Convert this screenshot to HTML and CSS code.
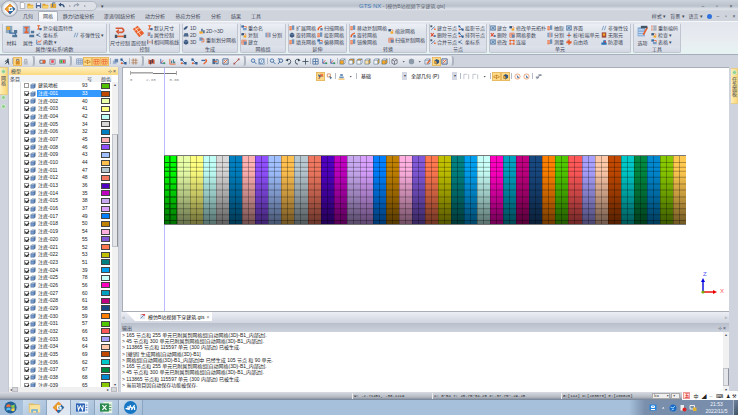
FILE: index.html
```html
<!DOCTYPE html>
<html lang="zh-CN">
<head>
<meta charset="utf-8">
<title>GTS NX</title>
<link rel="stylesheet" href="styles.css">
</head>
<body>
<div class="app">
  <header class="top">
    <button class="orb" aria-label="主菜单" data-icon="gts"></button>
    <div class="titlebar">
      <div class="quick" data-icons="doc folder save folder foldout undo dot redo dot"></div>
      <span class="quick-more">▾</span>
      <h1 class="title"><b>GTS NX</b> - [模仿B站视频下穿建筑.gts]</h1>
      <div class="winbtns"><button>–</button><button>▫</button><button>×</button></div>
    </div>
    <nav class="tabs">
      <a href="#">几何</a><a href="#" class="active">网格</a><a href="#" class="wide">静力/边坡分析</a><a href="#" class="wide">渗流/固结分析</a><a href="#" class="mid">动力分析</a><a href="#" class="wide">热应力分析</a><a href="#">分析</a><a href="#">结果</a><a href="#">工具</a>
      <div class="tabs-right"><button>样式 ▾</button><button>背景 ▾</button><button>语言 ▾</button><span class="help"></span><button>–</button><button>▫</button><button>×</button></div>
    </nav>
  </header>
  <section class="ribbon" id="ribbon"></section>
  <section class="toolbar">
    <div class="pill p1" data-icons="run | lock:on lockg"></div>
    <div class="pill p2" data-icons="radio record greenrec"></div>
    <div class="pill p3" data-icons="grid wire:on mesh:on mesh:on | copy nodes | hash"></div>
    <div class="pill p4" data-icons="flag axis bars nodes nodes turn split frame line"></div>
    <div class="pill p5" data-icons="zoom zoomw | zoom zoomi rotl rotr plus | views axis axis | cubea cubeb cubec cubed cubee cubef | wirecube drop ball drop brush shade:on frame"></div>
  </section>
  <main class="work">
    <aside class="rail left"><div class="railtab"><i class="dotg"></i><span>网格</span></div><i class="dotg"></i><i class="dotg"></i></aside>
    <section class="panel">
      <div class="panel-head"><span>模型</span><span class="tools">⊹ ×</span></div>
      <div class="tree">
        <table>
          <thead><tr><th>条目</th><th>号</th><th>颜色</th></tr></thead>
          <tbody id="rows"></tbody>
        </table>
        <div class="vscroll"><span>▴</span><div class="thumb"></div><span>▾</span></div>
      </div>
      <div class="hscroll"><span>◂</span><i></i><span class="end">▸</span><i></i></div>
    </section>
    <section class="center">
      <div class="viewport">
        <div class="origin"></div>
        <div class="viewtop">
          <div class="scale"><div class="bar"></div><div class="marks"><span>0</span><span>2.83</span><span>5.66</span></div></div>
          <div class="selectbar">
            <span data-icons="pick:on picks | person drop |"></span>
            <span class="pickbox"><select aria-label="选择类型"><option>基础</option></select></span>
            <span class="pickbox"><select aria-label="过滤"><option>全部几何 (P)</option></select></span>
            <span class="after" data-icons="| dash dash drop | wire:on shade:on | clock clock | link"></span>
          </div>
        </div>
        <div class="mesh" id="mesh"></div>
        <svg class="triad" viewBox="0 0 26 26"><path d="M6 20V9" stroke="#0000e0" stroke-width="1.4"/><path d="M4 10L6 6l2 4z" fill="#0000e0"/><path d="M6 20h11" stroke="#e80000" stroke-width="1.4"/><path d="M16 18l4 2-4 2z" fill="#e80000"/><circle cx="6" cy="20" r="1.6" fill="#7a0"/><text x="6" y="4" class="z">Z</text><text x="23" y="21" class="x">X</text></svg>
      </div>
      <div class="docs"><span class="arr">◃</span><div class="doctab"><i data-icon="page"></i><span>模仿B站视频下穿建筑.gts</span><small>×</small></div><span class="arr last">▹</span></div>
      <div class="out-head"><span>输出</span><span class="tools">⊹ ×</span></div>
      <div class="output">
        <ul>
          <li>&gt; 165 节点和 255 单元已附属到网格组[自动网格(3D)-B1_内部边].</li>
          <li>&gt; 45 节点和 300 单元已附属到网格组[自动网格(3D)-B1_内部边].</li>
          <li>&gt; 113865 节点和 115597 单元 (300 内部边) 已被生成.</li>
          <li>&gt; [撤销] 生成网格[自动网格(3D)-B1]</li>
          <li>&gt; 网格组[自动网格(3D)-B1_内部边]中 已经生成 105 节点 和 90 单元.</li>
          <li>&gt; 165 节点和 255 单元已附属到网格组[自动网格(3D)-B1_内部边].</li>
          <li>&gt; 45 节点和 300 单元已附属到网格组[自动网格(3D)-B1_内部边].</li>
          <li>&gt; 113865 节点和 115597 单元 (300 内部边) 已被生成.</li>
          <li>&gt; 当前项目因自动保存功能被保存.</li>
        </ul>
        <div class="vscroll out"><span>▴</span><div class="thumb"></div><span>▾</span></div>
      </div>
    </section>
    <aside class="rail right"><div class="railtab tall"><i class="dotg"></i><span>任务面板</span></div></aside>
  </main>
  <footer class="status">
    <span class="s1">W: -2.71451, -30.2219</span><span class="s2">X: 0~54 Y: 25.75~34.25 Z:-37.75~-29.25</span><span class="s3">G:[144] N:[283073] E:[288020]</span>
    <span class="unit">kN <b>▾</b></span><span class="unit small"><b>▾</b></span>
    <div class="ime"><b>五</b><span>中</span><span>◢</span><span>··</span><span>⌨</span><span>♟</span><span>⚒</span></div>
  </footer>
  <div class="taskbar">
    <button class="task start" aria-label="开始" data-icon="win"></button>
    <button class="task" aria-label="资源管理器" data-icon="explorer"></button>
    <button class="task on" aria-label="GTS NX" data-icon="gts"></button>
    <button class="task" aria-label="Word" data-icon="word"></button>
    <button class="task" aria-label="Excel" data-icon="excel"></button>
    <button class="task" aria-label="录屏" data-icon="jx"></button>
    <div class="tray"><span class="trayicons" data-icons="trayblue up globe trayred traynet"></span><time>21:53<br>2022/11/5</time><i class="peek"></i></div>
  </div>
</div>
<script src="app.js"></script>
</body>
</html>
```
FILE: styles.css
```css
* { box-sizing: border-box; }
body { margin: 0; overflow: hidden; font: 5px/6px "Liberation Sans", "Noto Sans CJK SC", sans-serif; color: #3f4756; background: #d0d4de; }
button, select, input { font: inherit; color: inherit; margin: 0; padding: 0; border: 0; background: none; }
a { color: inherit; text-decoration: none; }
ul { list-style: none; margin: 0; padding: 0; }
svg { display: block; }
.app { height: 100vh; display: flex; flex-direction: column; }
.icon { width: 7px; height: 7px; flex: none; }
[data-icons] { display: flex; align-items: center; }
.sep { width: 1px; height: 6px; background: #b4bac6; flex: none; }

.top { position: relative; background: linear-gradient(#cdd3dc, #b9c1cb 6px, #dfe3ea 9px, #cfd3dc 11px); }
.orb { position: absolute; left: 1px; top: 0; width: 17px; height: 17px; border-radius: 50%; background: radial-gradient(#fff 40%, #dfe3e8 60%, #8f98a6); border: 1px solid #a0a8b4; display: grid; place-items: center; }
.orb .icon { width: 12px; height: 12px; }
.titlebar { height: 11px; display: flex; align-items: center; }
.quick { margin-left: 14px; padding: 0 8px 0 5px; width: 83px; height: 10px; justify-content: space-between; border: 1px solid #b4bbc6; border-left: 0; border-radius: 0 6px 6px 0; background: #dde1e7; }
.quick-more { margin-left: 4px; }
.title { flex: 1; margin: 0; text-align: center; font-size: 5px; font-weight: 400; color: #5d6470; }
.title b { font-weight: 400; color: #3f79b8; font-size: 6px; }
.winbtns { display: flex; gap: 8px; padding-right: 4px; }
.winbtns button { width: 6px; }
.tabs { height: 10px; display: flex; padding-left: 18px; align-items: stretch; }
.tabs > a { width: 20px; text-align: center; line-height: 10px; white-space: nowrap; }
.tabs .active { background: linear-gradient(#fff, #eef1f6); border: 1px solid #a9b1be; border-bottom: 0; border-radius: 2px 2px 0 0; line-height: 9px; }
.tabs .wide { width: 41px; }
.tabs .mid { width: 30px; }
.tabs .wide + .mid + .wide { width: 36px; }
.tabs-right { margin-left: auto; display: flex; align-items: center; gap: 4px; padding-right: 2px; }
.tabs-right button { min-width: 4px; white-space: nowrap; }
.help { width: 5px; height: 5px; border-radius: 50%; background: #2f72dd; }

.ribbon { height: 34px; display: flex; gap: 2px; padding: 1px 1px 1px 2px; background: linear-gradient(#e3e6ee, #e8edf1 20px, #e6f3f3); border-top: 1px solid #f5f6f8; border-bottom: 1px solid #a7aebb; }
.group { border: 1px solid #c0c5d0; border-top-color: #e4e7ee; border-radius: 2px; background: linear-gradient(#eceff5, #dfe3eb 8px, #d9dde7 24px, #d9dee8); display: flex; flex-direction: column; }
.cols { flex: 1; display: flex; }
.col { display: flex; flex-direction: column; justify-content: space-around; flex: none; }
.col.two { justify-content: center; gap: 3px; }
.item { display: flex; align-items: center; gap: 1px; white-space: nowrap; line-height: 6px; height: 6px; }
.item .icon { width: 6px; height: 6px; }
.big { justify-content: center; gap: 2px; align-items: center; }
.bigbtn { display: flex; flex-direction: column; align-items: center; gap: 2px; white-space: nowrap; width: 100%; }
.bigbtn .icon { width: 13px; height: 13px; }
.caption { height: 6px; line-height: 6px; text-align: center; background: linear-gradient(#dfe3ec, #d2d7e2); }

.toolbar { height: 12px; display: flex; background: #ced3dd; padding: 1px 0; }
.pill { display: flex; align-items: center; justify-content: space-between; padding: 0 4px; border-right: 2px solid #aeb5c1; border-radius: 0 3px 3px 0; background: linear-gradient(#f0f2f6, #d5dae3); }
.p1 { width: 35px; } .p2 { width: 37px; } .p3 { width: 72px; } .p4 { width: 102px; } .p5 { width: 208px; }
.hot { background: #ffd98a; box-shadow: 0 0 0 1px #e8bb62; }

.work { flex: 1; min-height: 0; display: flex; }
.rail { width: 8px; background: #ced3dd; flex: none; }
.rail.right { width: 9px; padding: 1px 0 0 2px; }
.railtab { height: 28px; background: linear-gradient(90deg, #ffeeb8, #fbd877); border: 1px solid #e6cd88; border-left: 0; padding-top: 1px; }
.railtab.tall { height: 36px; }
.railtab span { writing-mode: vertical-rl; display: block; line-height: 6px; margin-top: 2px; }
.dotg { display: block; width: 5px; height: 5px; margin: 0 0 4px 1px; border-radius: 50%; background: #8fcf8f; border: 1px solid #d5edcb; }
.railtab .dotg { margin-bottom: 0; }
.panel { width: 111px; flex: none; display: flex; flex-direction: column; border: solid #c2c7d0; border-width: 0 1px; background: #fff; }
.panel-head { height: 8px; flex: none; display: flex; justify-content: space-between; align-items: center; padding: 0 2px; background: linear-gradient(#fff0c0, #fbd980); }
.tree { flex: 1; min-height: 0; display: flex; overflow: hidden; }
.tree table { flex: 1; display: flex; flex-direction: column; min-width: 0; }
thead { background: #f2f3f5; }
tr { display: grid; grid-template-columns: 1fr 28px 9px; align-items: center; width: 101px; }
thead tr { height: 7px; width: 106px; grid-template-columns: 1fr 14px 15px; }
th, td { padding: 0; font-weight: 400; text-align: left; line-height: 6px; white-space: nowrap; }
th { padding-left: 1px; }
tbody { display: grid; grid-template-rows: repeat(40, 1fr); flex: none; height: calc(100% - 5px); background: linear-gradient(90deg, transparent 3px, #ececec 3px 4px, transparent 4px 11px, #e0e0e0 11px 12px, transparent 12px); }
.cell { display: flex; align-items: center; padding-left: 15px; height: 7px; }
.cell input { appearance: none; width: 5px; height: 5px; border: 1px solid #999; background: #fff; flex: none; position: relative; }
.cell input:checked::after { content: ""; position: absolute; left: 0; top: 0; width: 3px; height: 2px; border: solid #222; border-width: 0 0 1px 1px; transform: rotate(-45deg); }
.cell .icon { width: 6px; height: 6px; margin: 0 1px; }
.cell label { padding: 0 1px; flex: 1; height: 7px; line-height: 7px; color: #222; }
.num { padding-left: 9px; height: 7px; line-height: 7px; color: #222; }
.sel label, .sel .num { background: #3399ff; color: #fff; }
.sw { height: 6px; border: 1px solid #454545; }
.vscroll { width: 6px; margin-top: 7px; background: #f1f1f1; display: flex; flex-direction: column; justify-content: space-between; align-items: center; font-size: 4px; line-height: 5px; flex: none; position: relative; }
.vscroll .thumb { position: absolute; left: 0; right: 0; top: 17%; height: 37%; background: #e4e5e8; border: 1px solid #bfc2c8; border-right-color: #8d9098; }
.hscroll { height: 5px; flex: none; display: flex; align-items: center; background: #f0f0f0; font-size: 4px; line-height: 5px; padding: 0 1px; }
.hscroll i { width: 6px; height: 5px; background: #d5d6da; border: 1px solid #babcc2; }
.hscroll .end { margin-left: auto; margin-right: 2px; }

.center { flex: 1; min-width: 0; display: flex; flex-direction: column; padding-left: 2px; }
.viewport { flex: 1; min-height: 0; position: relative; background: #fff; border: 1px solid #a9adb6; border-width: 1px 0 1px 1px; margin-left: 1px; display: flex; flex-direction: column; }
.origin { position: absolute; left: 41px; top: 0; bottom: 0; width: 1px; background: #b9b9ff; }
.viewtop { height: 87px; flex: none; display: flex; align-items: flex-start; }
.scale { margin: 3px 0 0 7px; width: 49px; color: #888; font: 4px/6px "Liberation Mono", monospace; }
.bar { width: 47px; height: 4px; border: solid #aaa; border-width: 0 1px; background: linear-gradient(90deg, #aaa 50%, #fff 50%) 0 1px / 100% 1px no-repeat, linear-gradient(90deg, #ccc 50%, #777 50%) 0 2px / 100% 1px no-repeat; }
.marks { display: flex; justify-content: space-between; margin-top: 2px; }
.selectbar { display: flex; align-items: center; margin: 4px 0 0 138px; }
.selectbar [data-icons] { gap: 2px; }
.selectbar .after { margin-left: 3px; }
.pickbox { display: flex; align-items: center; width: 50px; }
.pickbox:first-of-type { width: 45px; }
.pickbox::after { content: "▾"; width: 5px; flex: none; height: 8px; line-height: 8px; font-size: 4px; text-align: center; background: #d5d8e3; }
.pickbox select { appearance: none; flex: 1; min-width: 0; height: 8px; padding-left: 4px; line-height: 8px; color: #111; border-radius: 0; }
.mesh { position: relative; height: 70px; margin: 0 43px 0 41px; display: flex; flex: none; border: solid #777; border-width: 1px 0; }
.mesh i { flex: 1; border-left: 1px solid rgba(0,0,0,.25); background: linear-gradient(90deg, transparent 5px, rgba(0,0,0,.28) 5px 6px, transparent 6px); }
.mesh svg { position: absolute; inset: 0; width: 100%; height: 100%; }
.triad { position: absolute; right: 6px; bottom: 13px; width: 26px; height: 26px; overflow: visible; }
.triad text { font-size: 6px; } .z { fill: #55f; } .x { fill: #f55; }
.docs { height: 11px; flex: none; display: flex; align-items: stretch; background: linear-gradient(#eceef4, #cfd4df); }
.arr { width: 5px; line-height: 10px; padding-left: 1px; color: #888; }
.last { margin-left: auto; }
.doctab { display: flex; align-items: center; gap: 2px; background: #fff; padding: 0 3px 0 13px; height: 9px; color: #111; clip-path: polygon(0 0, 100% 0, 100% 100%, 9px 100%); white-space: nowrap; }
.doctab small { font-size: 5px; color: #777; }
.out-head { height: 9px; flex: none; display: flex; justify-content: space-between; align-items: center; padding: 0 3px 0 1px; background: linear-gradient(#b8bfcb, #cdd3dd); }
.output { height: 60px; flex: none; display: flex; background: #fff; }
.output ul { flex: 1; display: grid; grid-template-rows: repeat(9, 1fr); height: 56px; padding-left: 1px; color: #222; white-space: nowrap; }
.vscroll.out { margin: 0; }
.out .thumb { top: 60%; height: 30%; }

.status { height: 7px; flex: none; display: flex; align-items: center; position: relative; background: linear-gradient(#d8dbe1, #b5bac3 5px, #8d949f); font: 4px/6px "Liberation Mono", monospace; padding-right: 58px; justify-content: flex-end; white-space: nowrap; color: #222; }
.status > span { border-left: 1px solid #e8eaee; padding-left: 1px; height: 6px; }
.s1 { width: 80px; } .s2 { width: 129px; } .s3 { width: 90px; }
.status .unit { width: 18px; background: #eee; display: flex; justify-content: space-between; border: 1px solid #aaa; line-height: 4px; margin-left: 1px; }
.status .small { width: 9px; }
.ime { position: absolute; right: 0; bottom: -1px; width: 56px; height: 9px; background: #fdfdfd; display: flex; align-items: center; justify-content: space-around; font: 5px/6px "Liberation Sans", "Noto Sans CJK SC", sans-serif; z-index: 2; }
.ime b { color: #d33; border: 1px solid #e99; line-height: 5px; background: #fde6e0; }

.taskbar { height: 16px; flex: none; display: flex; background: #a6c0dc; border-top: 1px solid #7c8b9d; }
.task { width: 24px; display: grid; place-items: center; border-right: 1px solid #8ba4c0; background: linear-gradient(135deg, #cbdbeb, #a4bdd8); }
.start { width: 23px; background: none; border-right: 0; padding-right: 3px; }
.task.on { background: #dfe8f2; }
.task .icon { width: 13px; height: 13px; }
.tray { margin-left: auto; display: flex; align-items: center; padding-left: 20px; background: linear-gradient(90deg, #a6c0dc, #7a8fab 16px, #788dab); color: #f4f7fb; }
.trayicons { gap: 2px; margin-right: 7px; }
.trayicons .icon { width: 8px; height: 8px; }
.tray time { width: 25px; text-align: center; line-height: 7px; }
.peek { width: 5px; height: 100%; margin-left: 4px; background: linear-gradient(135deg, #71849e, #3f5368); border-left: 1px solid #a9b9cb; }
```
FILE: app.js
```js
const cube = (a, b, c) => `<path fill="${a}" d="M2 5h9v9H2z"/><path fill="${b}" d="M2 5l3-3h9l-3 3z"/><path fill="${c}" d="M11 5l3-3v9l-3 3z"/><path d="M2 5h9v9H2zl3-3h9v9l-3 3M11 5l3-3" fill="none" stroke="#35577c"/>`;
const Y = '#f5a623', W = '#f5f7fa', B = '#3c6ca5', O = '#e8612c';
const s = (d, c = B, w = 2) => `<path d="${d}" fill="none" stroke="${c}" stroke-width="${w}"/>`;
const f = (d, c = B) => `<path d="${d}" fill="${c}"/>`;
const nodes = s('M4 4l8 8M4 12h8') + f('M1 1h5v5H1zM10 9h5v6h-5z', '#2d5c93') + f('M2 10h4v4H2z', O);
const mesh = s('M2 3h12v11H2zM2 8h12M6 3v11M10 3v11', O, 1.5);
const arrow = s('M3 13L12 4M7 3h6v6', O);
const ICONS = {
  gts: f('M8 1l7 7-7 7-7-7z', '#d8342a') + f('M8 1l3.500 3.500-7 7L1 8z', '#e8a02c') + f('M8 8l3.500-3.500L15 8l-7 7-2-2z', '#2272a8') + s('M11 6H7v4h4V8H9', '#fff', 1.5),
  doc: f('M3 1h7l3 3v11H3z', '#fff') + s('M3 1h7l3 3v11H3z', '#667', 1),
  folder: f('M1 4h6l1 2h6v8H1z', '#d99a28') + f('M3 8h13l-3 6H1z', '#f7cf68'),
  foldout: f('M1 4h13v10H1z', '#e0a83a') + s('M6 11V2h6', '#45658f'),
  save: f('M2 2h12v12H2z', '#48668f') + f('M4 2h8v5H4zM5 10h6v4H5z', '#eef'),
  undo: s('M3 6h6q4 0 5 6', '#33507c', 3) + f('M7 1v10L1 6z', '#33507c'),
  redo: s('M13 6H7q-4 0-5 5', '#9ba4b4', 3) + f('M9 1v10l6-5z', '#9ba4b4'),
  dot: f('M7 8h3v2H7z', '#778'), drop: f('M6 7h5l-2.500 3z', '#556'), up: f('M6 9h5L8.500 6z', '#fff'),
  run: f('M9 1a2 2 0 110 4 2 2 0 010-4M6 5h5v6H6z', '#345') + s('M7 9L3 14M10 9l1 6M2 8l4-2', '#345'),
  lock: f('M4 7h9v8H4z', '#d48b24') + s('M6 7V3h5v4', '#667'), lockg: f('M4 7h9v8H4z', '#b6bac4') + s('M6 7V3h5v4', '#a0a5b0'),
  radio: s('M2 5h12v7H2z', '#667') + f('M8 5h6v7H8z', O), record: s('M2 3h12v11H2z', '#889') + f('M5 5h6v6H5z', '#e45'), greenrec: s('M1 4h14v8H1z', '#889') + f('M3 5h5v6H3z', '#3a3') + f('M9 5h4v6H9z', '#e33'),
  grid: s('M1 2h14v12H1zM1 6h14M1 10h14M6 2v12M11 2v12', '#8fa6c5', 2), wire: s('M1 9q7-7 14 0M1 9q7 6 14 0M8 4v10', '#b87518', 1.500),
  mesh, copy: f('M2 6h8v8H2z', '#9fb5d2') + f('M6 2h8v8H6z', '#6a8ab2'), nodes, hash: s('M5 1v14M11 1v14M1 5h14M1 11h14', '#b4835f'),
  flag: f('M1 3l5 2 4-3 5 2v10l-5-2-4 3-5-2z', '#c65a3a') + s('M6 5v9M10 3v9', '#335'), axis: s('M4 2v10h10', '#3669b8') + s('M4 12l6-7', '#d33', 1.500) + f('M10 10h4v4h-4z', '#3a9a55'),
  bars: s('M2 2v12h13', O) + s('M6 12V6M10 12V3M13 12V8', '#267'), turn: f('M1 4h9v3H1z', B) + s('M10 3q5 3 1 6L6 14', O, 3),
  split: f('M1 2h6v12H1z', '#47688e') + s('M9 4h5v9H9z', '#47688e') + s('M4 8h7', O), frame: s('M2 2h12v12H2z', '#46648a') + s('M4 12l8-8M5 5l5 5', O), line: s('M3 13L13 3', '#b95b50') + f('M1 11h4v4H1zM11 1h4v4h-4z', '#a55'),
  zoom: s('M3 6a4 4 0 118 0 4 4 0 01-8 0M10 9l5 5'), zoomi: s('M5 6a4 4 0 118 0 4 4 0 01-8 0M6 9l-4 5M2 2h4', '#345f91'), zoomw: f('M1 1h14v14H1z', '#7b9ac0') + s('M5 7a3 3 0 116 0 3 3 0 01-6 0M10 10l3 3', '#fff'),
  rotl: s('M4 4q9-3 9 4t-6 6', '#345') + f('M1 5l6-4v7z', '#345'), rotr: s('M12 4Q3 1 3 8t6 6', '#345') + f('M15 5L9 1v7z', '#345'), plus: s('M8 1v14M1 8h14', '#456'), views: s('M2 2h12v12H2zM8 2v12M2 8h12', '#5579a5'),
  cubea: cube(Y, W, W), cubeb: cube(W, Y, Y), cubec: cube(W, Y, W), cubed: cube('#fbe0a4', W, Y), cubee: cube(W, W, Y), cubef: cube(Y, W, Y),
  wirecube: s('M8 1l6 3v8l-6 3-6-3V4zM2 4l6 3 6-3M8 7v8', '#556', 1.500), ball: f('M8 1l6 3v8l-6 3-6-3V4z', '#8c99a9'), brush: cube('#dde4ee', W, W) + s('M7 13l7-8', O, 3), shade: f('M3 6l5-4 6 3v6l-6 4-5-3z', '#35577c') + f('M3 6l5 2v6l-5-3z', Y),
  pick: f('M2 3l11 4-5 2-2 5z', '#45688d') + arrow, picks: s('M3 2h7v7H3z', '#d59060') + f('M7 6l7 5-4 3z', '#55718f'), person: f('M5 2h6v5H5zM3 8h10v4H3z', '#6d92bc') + s('M1 14h14', Y), dash: s('M2 14V3h8M13 3v11', '#a5acb5', 1.500), clock: s('M2 8a6 6 0 1112 0A6 6 0 012 8', '#ea7d42', 1.500) + f('M6 4l6 6-4 2z', B), link: f('M2 8h7v4H2zM8 3h7v4H8z', '#8d96a4') + s('M4 14l8-10', '#8d96a4'),
  page: f('M2 2h11l1 12H2z', '#dfe5ee') + f('M4 2h10v5z', '#d44') + s('M4 12l7-7', B, 1.500),
  solid: cube('#779bd0', '#c8d9f2', '#4872ab'),
  mat: f('M1 1h8v9H1z', '#8ba7bb') + f('M2 2h4v4H2z', Y) + s('M6 6v4h7v3', B, 1.500) + f('M11 6h4v4h-4zM9 12h6v3H9z', '#52779c'), prop: f('M1 1h9v10H1z', '#9ab2d2') + s('M3 3h5M5.500 3v6M3 9h5', O) + f('M11 7h4v3h-4zM9 12h6v3H9z', '#52779c'),
  sect: s('M3 2h8M7 2v9M3 11h8', O, 2.500) + f('M9 8h6v6H9z', B), csys: s('M3 8l7-5M3 8l9 5', B) + f('M1 6h4v4H1z', '#567'), func: s('M2 2v12h12', B) + s('M4 11l4-6 2 4 5-7', O), hinge: s('M3 14L7 2M9 14l4-12', B, 1.500),
  size: s('M2 4h8q4 3 0 5H6', '#d85b38') + f('M6 5v7L2 8z', '#d85b38') + s('M2 14h12', O, 2) + f('M1 12h3v4H1zM12 12h3v4h-3z', '#456'), face: f('M1 5l6-4 8 9-6 5z', O) + s('M3 7l6-4M6 10l6-4M4 3l7 10', '#ffe2cf', 1),
  seed: s('M2 2v12M14 2v12', '#445') + s('M4 8h8', O), one: f('M2 9l6-6 6 1-6 7-6 2z', '#39577e'), two: f('M4 3h9l2 9H1z', '#39577e') + s('M2 8h12', '#9bb4d4', 1), three: f('M8 1l6 4v7l-6 3-6-3V5z', '#39577e') + s('M2 5l6 3 6-3', '#b8cbe2', 1),
  up3: f('M1 9h9v6H1z', Y) + f('M6 2h4v7H6zM11 6h4v8h-4z', '#46698f'), re: f('M1 1h9v9H1z', '#6f9ccc') + s('M5 5h8v8H6', O),
  part: f('M1 1h7v6H1z', B) + f('M5 8h10v6H5z', '#799dc5') + s('M8 4h6v4', O), copy2: f('M1 3h7v6H1z', '#375679') + f('M7 9h7v6H7z', Y) + s('M9 4l5 3', O), newg: mesh + f('M8 7h7v8H8z', '#5e87b5'), cut: f('M1 2h5v12H1zM10 2h5v12h-5z', '#80a1c8') + s('M8 1v14', O),
  ext: f('M1 3h6v11H1z', O) + f('M8 1h6v12H8z', '#7095bd') + s('M3 3v10M1 8h6', '#fff', 1), swp: s('M3 14Q3 5 13 3', O, 4) + f('M9 8h6v7H9z', '#5a80ac'), del: s('M2 3l8 9M10 3l-8 9', '#dc4b2d', 3) + f('M11 8h4v5h-4z', B), node: s('M3 13L13 4', B) + f('M1 1h5v5H1z', '#456') + f('M11 9h4v4h-4z', O), 
  edit: f('M1 2h14v12H1z', '#a8c2df') + s('M1 2h14v12H1zM3 12L13 4M5 5l8 8', '#46698f', 1.500), link2: s('M3 4h10v9H3z', O) + f('M1 2h4v4H1zM11 2h4v4h-4zM1 11h4v4H1zM11 11h4v4h-4z', O), pile: s('M8 1v14M2 9h12', B) + f('M5 7h6v4H5z', O), free: f('M6 1h4v14H6zM1 6h14v5H1z', O) + s('M3 3l10 10', '#a33', 1), inf: f('M2 1h12v14H2z', '#a34a38') + f('M5 4h6v6H5z', Y), wall: f('M1 9h14v6H1zM6 3h7v6H6z', '#2772b6') + f('M9 5h4v4H9z', '#d44'),
  opt: f('M2 3h9v11H2z', '#7eaad6') + s('M3 6h7M3 9h7M3 12h7', '#eef', 1) + s('M9 12l5-9', O) + f('M6 1h8v3H6z', '#456'), list: s('M1 3h3M1 8h3M1 13h3', O, 3) + s('M6 3h9M6 8h9M6 13h9', '#567'),
  win: '<circle cx="8" cy="8" r="7.500" fill="#226197"/>' + f('M3 5q3-2 5 0v3q-2-2-5 0z', '#ef7037') + f('M9 5q2 1 4-1v4q-2 1-4 0z', '#8dce48') + f('M3 9q3-2 5 0v3q-2-2-5 0z', '#56bdf2') + f('M9 9q2 1 4-1v4q-2 1-4 0z', '#ffd34c'),
  explorer: f('M1 3h6l1 1h6v10H1z', '#e1bd67') + f('M2 5h13v9H2z', '#f9e29b') + s('M5 14v-3h6v3', '#6aaedb'),
  word: f('M4 1h11v14H4z', '#e8f0fb') + f('M0 3h11v10H0z', '#2a62b5') + s('M2 5l1 6 2.500-5L8 11l1-6', '#fff', 1.300) + s('M12 5h2M12 8h2M12 11h2', '#2a62b5', 1),
  excel: f('M4 1h11v14H4z', '#e6f3e5') + f('M0 3h11v10H0z', '#2a8a4b') + s('M3 5l5 6M8 5l-5 6', '#fff', 1.500) + s('M11 5h3M11 8h3M11 11h3', '#2a8a4b', 1),
  jx: '<circle cx="8" cy="8" r="8" fill="#1476c4"/>' + s('M2 9l3 1V6M8 5L6 11M8 7l3 3M13 5l-4 6M13 7v4', '#fff', 1.500),
  trayblue: f('M1 1h14v12H1z', '#2585df') + s('M5 4h6v3H5zM4 11h8', '#fff'), globe: '<circle cx="8" cy="8" r="7" fill="#196bc8"/>' + s('M3 6l5 2 4-4M5 12l5-2', '#9bd0ff'), trayred: f('M3 2h7v11H3z', '#eee') + '<circle cx="11" cy="11" r="4" fill="#d22"/>', traynet: s('M2 3h9v7H2z', '#eee') + f('M8 7h7v7H8z', '#e3b231')
};
const svg = n => `<svg class="icon" viewBox="0 0 16 16" aria-hidden="true">${ICONS[n] || ''}</svg>`;
document.querySelectorAll('[data-icon]').forEach(e => { e.innerHTML = svg(e.dataset.icon); });
document.querySelectorAll('[data-icons]').forEach(e => {
  e.innerHTML = e.dataset.icons.split(' ').map(t => {
    if (t === '|') return '<span class="sep"></span>';
    const [n, on] = t.split(':');
    return on ? svg(n).replace('"icon"', '"icon hot"') : svg(n);
  }).join('');
});

// Each group: caption, width, columns of [width, items]; a leading * marks a large button.
const GROUPS = [
  ['属性/坐标系/函数', 105, [[17, '*mat 材料'], [16, '*prop 属性'], [37, 'sect 复杂截面特性', 'csys 坐标系', 'func 函数 ▾'], [34, 'hinge 非弹性铰 ▾']]],
  ['控制', 71, [[20, '*size 尺寸控制'], [17, '*face 面控制'], [32, 'sect 默认尺寸', 'prop 属性控制', 'seed 相同网格线']]],
  ['生成', 56, [[16, 'one 1D', 'two 2D', 'three 3D'], [38, 'up3 2D->3D', 're 重新划分网格']]],
  ['网格组', 46, [[24, 'part 重命名', 'copy2 复制', 'newg 建立'], [20, 'cut 分割']]],
  ['延伸', 59, [[28, 'ext 扩展网格', 'three 旋转网格', 'ext 填充网格'], [28, 'swp 扫描网格', 'ext 投影网格', 'part 偏移网格']]],
  ['转换', 78, [[38, 'ext 移动复制网格', 'swp 旋转网格', 'ext 镜像网格'], [38, 'copy2 缩放网格', 'newg 扫描复制网格']]],
  ['节点', 58, [[28, 'node 建立节点', 'del 删除节点', 'node 合并节点'], [28, 'nodes 投影节点', 'nodes 排列节点', 'csys 坐标系']]],
  ['单元', 142, [[19, 'edit 建立', 'del 删除', 'edit 修改'], [38, 'copy2 修改单元拓扑', 'newg 网格参数', 'link2 连接'], [19, 'ext 抽取', 'cut 分割', 'ext 测量'], [35, 'edit 界面', 'pile 桩/桩端单元', 'free 自由场'], [27, 'hinge 非弹性铰', 'inf 无限元', 'wall 防渗墙']]],
  ['工具', 48, [[17, '*opt 选项'], [29, 'list 重新编码', 'copy2 检查 ▾', 'part 表格 ▾']]]
];
const item = t => {
  const big = t[0] === '*', i = t.indexOf(' ');
  return `<button class="${big ? 'bigbtn' : 'item'}">${svg(t.slice(big ? 1 : 0, i))}<span>${t.slice(i + 1)}</span></button>`;
};
document.getElementById('ribbon').innerHTML = GROUPS.map(([cap, w, cols]) =>
  `<div class="group" style="width:${w}px"><div class="cols">${cols.map(([cw, ...it]) =>
    `<div class="col${it[0][0] === '*' ? ' big' : it.length === 2 ? ' two' : ''}" style="width:${cw}px">${it.map(item).join('')}</div>`).join('')}</div><div class="caption">${cap}</div></div>`).join('');

const COLORS = '50c000 c04800 e8ffa8 ffff80 c0fff8 d8d8d8 0080c0 ffb0b0 9050ff a0c0ff ffc050 b8c8d0 f07860 5000c0 c000c0 c8a8f0 d8a0ff 0080ff c08000 ffb0e0 8058d8 ff7850 c0c000 008080 00a0f0 c8fff8 ff00c0 00a0c0 c00080 184880 ff8000 50c800 ff5858 a8a0ff ffc8a8 c04800 00c8c8 008840 0088d0 88c800'.split(' ');
const NUMS = [93, 33, 40, 41, 42, 34, 32, 45, 46, 43, 44, 47, 48, 36, 35, 38, 37, 49, 50, 54, 55, 52, 53, 51, 39, 78, 56, 60, 61, 58, 59, 57, 66, 63, 64, 69, 62, 67, 68, 65];
document.getElementById('rows').innerHTML = COLORS.map((c, i) =>
  `<tr${i === 1 ? ' class="sel"' : ''}><td class="cell"><input type="checkbox" id="r${i}"${i ? ' checked' : ''}>${svg('solid')}<label for="r${i}">${i ? '注底-' + String(i).padStart(3, '0') : '建筑地桩'}</label></td><td class="num">${NUMS[i]}</td><td class="sw" style="background:#${c}"></td></tr>`).join('');

const rows = [6, 11, 15, 21, 28, 34, 41, 48, 53, 59, 65];
document.getElementById('mesh').innerHTML =
  ['00ff00', ...COLORS.slice(2), 'ffc850'].map(c => `<i style="background-color:#${c}"></i>`).join('') +
  `<svg viewBox="0 0 521 69" preserveAspectRatio="none"><defs><linearGradient id="sh" x2="0" y2="1"><stop offset=".2" stop-opacity="0"/><stop offset=".6" stop-opacity=".25"/><stop offset="1" stop-opacity=".56"/></linearGradient></defs><rect width="521" height="69" fill="url(#sh)"/><path d="${rows.map(y => `M0 ${y}.5h521`).join('')}" stroke="#000" stroke-opacity=".3"/><path d="${rows.map(y => `M0 ${y}.5h13`).join('')}M.5 0v69M12.500 0v69M5.500 0v69" stroke="#030" stroke-opacity=".6"/></svg>`;
```
